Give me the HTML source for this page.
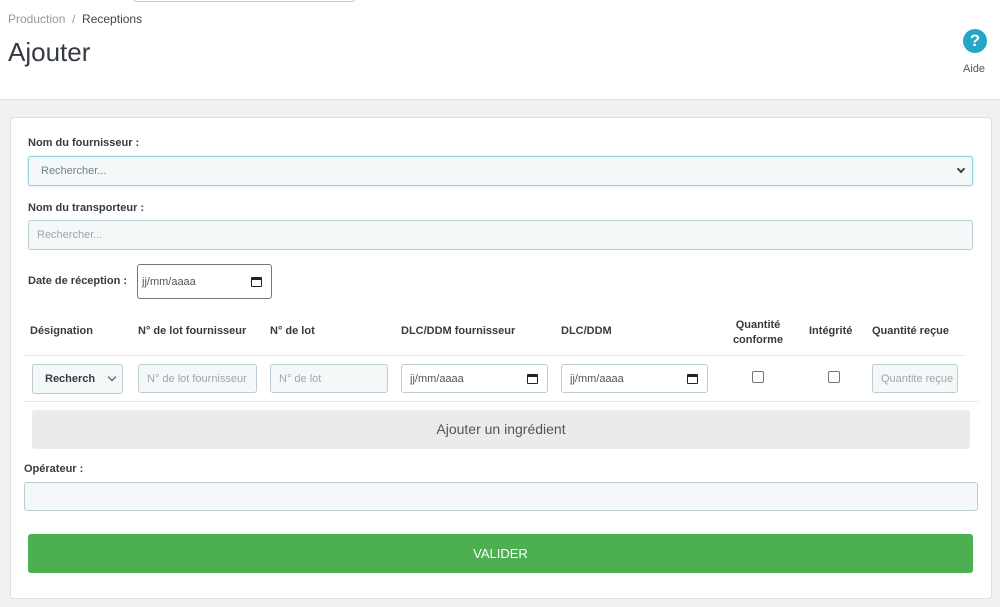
<!DOCTYPE html>
<html><head><meta charset="utf-8"><style>
*{box-sizing:border-box;margin:0;padding:0}
body{width:1000px;height:607px;background:#eff1f2;font-family:"Liberation Sans",sans-serif;position:relative;overflow:hidden;color:#363a41}
.a{position:absolute}
.lbl{position:absolute;font-size:11px;font-weight:bold;color:#363a41}
.inp{position:absolute;background:#f5f8f9;border:1px solid #bbcdd2;border-radius:3px;font-size:11px;color:#9aa7ab;padding-left:8px;display:flex;align-items:center;white-space:nowrap;overflow:hidden}
.date{position:absolute;background:#fff;border:1px solid #bbcdd2;border-radius:3px;font-size:11px;color:#555;padding-left:8px;display:flex;align-items:center}
.cal{position:absolute;right:9px;top:50%;margin-top:-5px;width:11px;height:10px;border:1.5px solid #222;border-top-width:3px;border-radius:1px}
.cb{position:absolute;width:12px;height:12px;border:1px solid #767676;border-radius:2px;background:#fff}
.th{position:absolute;font-size:11px;font-weight:bold;color:#363a41}
.chev{position:absolute;width:6px;height:6px;border-right:2px solid #444;border-bottom:2px solid #444;transform:rotate(45deg)}
</style></head><body>
<div class="a" style="left:0;top:0;width:1000px;height:100px;background:#fff;border-bottom:1px solid #dde2e4"></div>
<div class="a" style="left:133px;top:-6px;width:223px;height:8px;border:1px solid #bbcdd2;border-radius:4px"></div>
<div class="a" style="left:8px;top:12px;font-size:12px;color:#999">Production &nbsp;/&nbsp; <span style="color:#444">Receptions</span></div>
<div class="a" style="left:8px;top:37px;font-size:26px;color:#363a41">Ajouter</div>
<div class="a" style="left:963px;top:29px;width:24px;height:24px;border-radius:50%;background:#25a6c4;color:#fff;font-weight:bold;font-size:17px;text-align:center;line-height:24px">?</div>
<div class="a" style="left:963px;top:63px;font-size:11px;color:#555">Aide</div>

<div class="a" style="left:10px;top:117px;width:982px;height:482px;background:#fff;border:1px solid #dbe0e2;border-radius:4px"></div>

<div class="lbl" style="left:28px;top:137px">Nom du fournisseur :</div>
<div class="inp" style="left:28px;top:156px;width:945px;height:30px;border-color:#8fcfe0;color:#6c868e;padding-left:12px;box-shadow:0 0 2px #bfe6f0">Rechercher...</div>
<div class="chev" style="left:958px;top:166px"></div>

<div class="lbl" style="left:28px;top:202px">Nom du transporteur :</div>
<div class="inp" style="left:28px;top:220px;width:945px;height:30px">Rechercher...</div>

<div class="lbl" style="left:28px;top:275px">Date de réception :</div>
<div class="date" style="left:137px;top:264px;width:135px;height:35px;border-color:#767676;padding-left:4px">jj/mm/aaaa<div class="cal"></div></div>

<div class="th" style="left:30px;top:325px">Désignation</div>
<div class="th" style="left:138px;top:325px">N° de lot fournisseur</div>
<div class="th" style="left:270px;top:325px">N° de lot</div>
<div class="th" style="left:401px;top:325px">DLC/DDM fournisseur</div>
<div class="th" style="left:561px;top:325px">DLC/DDM</div>
<div class="th" style="left:718px;top:318px;text-align:center;width:80px;line-height:15px">Quantité<br>conforme</div>
<div class="th" style="left:809px;top:325px">Intégrité</div>
<div class="th" style="left:872px;top:325px">Quantité reçue</div>
<div class="a" style="left:24px;top:355px;width:940px;height:1px;background:#e5e8ea"></div>

<div class="inp" style="left:32px;top:364px;width:91px;height:30px;color:#363a41;font-weight:bold;padding-left:12px">Recherch</div>
<div class="chev" style="left:109px;top:374px;border-width:1.5px"></div>
<div class="inp" style="left:138px;top:364px;width:119px;height:29px">N° de lot fournisseur</div>
<div class="inp" style="left:270px;top:364px;width:118px;height:29px">N° de lot</div>
<div class="date" style="left:401px;top:364px;width:147px;height:29px">jj/mm/aaaa<div class="cal"></div></div>
<div class="date" style="left:561px;top:364px;width:147px;height:29px">jj/mm/aaaa<div class="cal"></div></div>
<div class="cb" style="left:752px;top:371px"></div>
<div class="cb" style="left:828px;top:371px"></div>
<div class="inp" style="left:872px;top:364px;width:86px;height:29px">Quantite reçue</div>
<div class="a" style="left:24px;top:401px;width:955px;height:1px;background:#e5e8ea"></div>

<div class="a" style="left:32px;top:410px;width:938px;height:39px;background:#ebebeb;border-radius:3px;font-size:14px;color:#555;text-align:center;line-height:39px">Ajouter un ingrédient</div>

<div class="lbl" style="left:24px;top:463px">Opérateur :</div>
<div class="inp" style="left:24px;top:482px;width:954px;height:29px"></div>

<div class="a" style="left:28px;top:534px;width:945px;height:39px;background:#4caf50;border-radius:3px;color:#fff;font-size:13px;text-align:center;line-height:39px">VALIDER</div>
</body></html>
